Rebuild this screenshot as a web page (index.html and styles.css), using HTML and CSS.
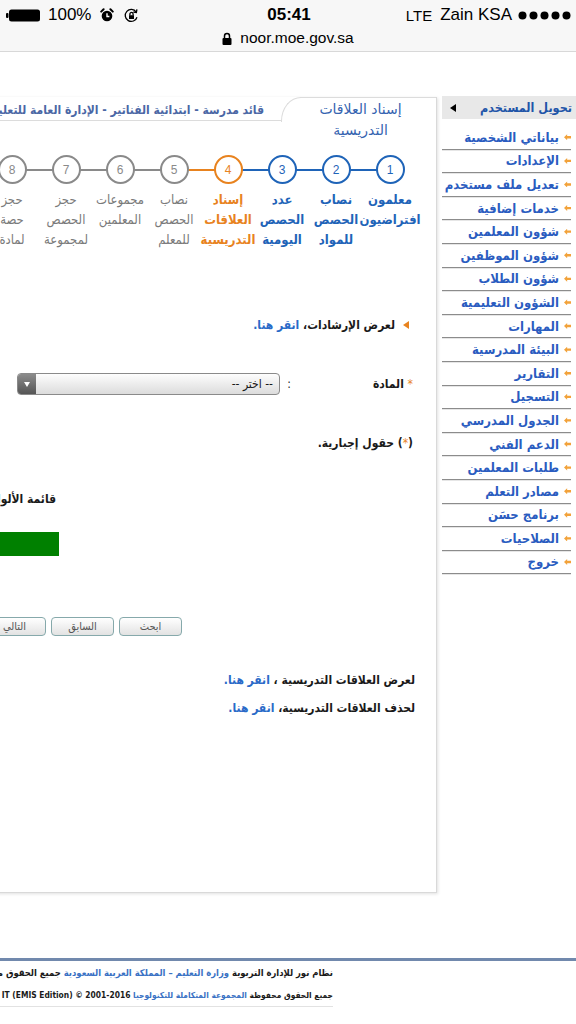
FILE: index.html
```html
<!DOCTYPE html>
<html lang="ar">
<head>
	<meta charset="UTF-8">
	<title>إسناد العلاقات التدريسية</title>
	<link rel="stylesheet" href="styles.css">
</head>
<body>
	<div class="statusbar">
		<div class="status-row">
			<div class="status-left">
				<svg width="35" height="13" viewBox="0 0 35 13"><rect x="0" y="4" width="2.5" height="5" rx="1"/><rect x="3" y="0.5" width="31" height="12" rx="2.5"/></svg>
				<span>100%</span>
				<svg class="ico-alarm" width="14" height="14" viewBox="0 0 14 14"><circle cx="7" cy="8" r="5.3"/><path d="M1.2 3.6 L3.6 1.2 M12.8 3.6 L10.4 1.2" stroke="#000" stroke-width="2" stroke-linecap="round"/><path d="M7 5.2v3.3h2.4" stroke="#fff" stroke-width="1.4" fill="none"/></svg>
				<svg class="ico-rotate" width="15" height="15" viewBox="0 0 15 15" fill="none" stroke="#000" stroke-width="1.3"><path d="M13 9.2 A6 6 0 1 1 12.2 4"/><path d="M12.9 1.4 L12.4 4.4 L9.4 4"/><rect x="5" y="7.2" width="5" height="3.8" fill="#000" stroke="none"/><path d="M5.9 7.2V6a1.6 1.6 0 0 1 3.2 0v1.2"/></svg>
			</div>
			<div class="status-time">05:41</div>
			<div class="status-right">
				<span class="lte">LTE</span>
				<span>Zain KSA</span>
				<svg width="54" height="9" viewBox="0 0 54 9"><circle cx="4.5" cy="4.5" r="4"/><circle cx="15.5" cy="4.5" r="4"/><circle cx="26.5" cy="4.5" r="4"/><circle cx="37.5" cy="4.5" r="4"/><circle cx="48.5" cy="4.5" r="4"/></svg>
			</div>
		</div>
		<div class="status-url">
			<svg width="10" height="13" viewBox="0 0 10 13"><path d="M2.5 6.5V4a2.5 2.5 0 0 1 5 0v2.5" fill="none" stroke="#000" stroke-width="1.5"/><rect x="0.5" y="6" width="9" height="7" rx="1"/></svg>
			<span>noor.moe.gov.sa</span>
		</div>
	</div>

	<div class="page">
		<div class="layout">
			<aside class="sidebar">
				<div class="side-head"><span>تحويل المستخدم</span><i class="tri"></i></div>
				<ul class="side-menu">
					<li><a href="#">بياناتي الشخصية</a></li>
					<li><a href="#">الإعدادات</a></li>
					<li><a href="#">تعديل ملف مستخدم</a></li>
					<li><a href="#">خدمات إضافية</a></li>
					<li><a href="#">شؤون المعلمين</a></li>
					<li><a href="#">شؤون الموظفين</a></li>
					<li><a href="#">شؤون الطلاب</a></li>
					<li><a href="#">الشؤون التعليمية</a></li>
					<li><a href="#">المهارات</a></li>
					<li><a href="#">البيئة المدرسية</a></li>
					<li><a href="#">التقارير</a></li>
					<li><a href="#">التسجيل</a></li>
					<li><a href="#">الجدول المدرسي</a></li>
					<li><a href="#">الدعم الفني</a></li>
					<li><a href="#">طلبات المعلمين</a></li>
					<li><a href="#">مصادر التعلم</a></li>
					<li><a href="#">برنامج حسَن</a></li>
					<li><a href="#">الصلاحيات</a></li>
					<li><a href="#">خروج</a></li>
				</ul>
			</aside>

			<main class="panel">
				<div class="panel-head">
					<div class="tab">إسناد العلاقات<br>التدريسية</div>
					<div class="crumb">قائد مدرسة - ابتدائية الفناتير - الإدارة العامة للتعليم</div>
				</div>

				<ol class="steps">
					<li class="step done"><span class="num">1</span><span class="label"><span>معلمون</span><span>افتراضيون</span></span></li>
					<li class="step done"><span class="num">2</span><span class="label"><span>نصاب</span><span>الحصص</span><span>للمواد</span></span></li>
					<li class="step done"><span class="num">3</span><span class="label"><span>عدد</span><span>الحصص</span><span>اليومية</span></span></li>
					<li class="step current"><span class="num">4</span><span class="label"><span>إسناد</span><span>العلاقات</span><span>التدريسية</span></span></li>
					<li class="step"><span class="num">5</span><span class="label"><span>نصاب</span><span>الحصص</span><span>للمعلم</span></span></li>
					<li class="step"><span class="num">6</span><span class="label"><span>مجموعات</span><span>المعلمين</span></span></li>
					<li class="step"><span class="num">7</span><span class="label"><span>حجز</span><span>الحصص</span><span>لمجموعة</span></span></li>
					<li class="step"><span class="num">8</span><span class="label"><span>حجز</span><span>حصة</span><span>لمادة</span></span></li>
				</ol>

				<p class="hint"><i class="hint-tri"></i><span>لعرض الإرشادات، <a href="#">انقر هنا.</a></span></p>

				<div class="field">
					<label class="field-label"><span class="req">*</span> المادة</label>
					<span class="colon">:</span>
					<div class="select"><span>-- اختر --</span><i class="select-btn"></i></div>
				</div>

				<p class="note">(<span class="req">*</span>) حقول إجبارية.</p>

				<div class="legend-title">قائمة الألوان</div>
				<div class="legend-bar"></div>

				<div class="buttons">
					<button type="button">ابحث</button>
					<button type="button">السابق</button>
					<button type="button">التالي</button>
				</div>

				<p class="link-line">لعرض العلاقات التدريسية ، <a href="#">انقر هنا.</a></p>
				<p class="link-line second">لحذف العلاقات التدريسية، <a href="#">انقر هنا.</a></p>
			</main>
		</div>

		<footer class="footer">
			<p>نظام نور للإدارة التربوية <a href="#">وزارة التعليم – المملكة العربية السعودية</a> جميع الحقوق محفوظة</p>
			<p class="footer-end">جميع الحقوق محفوظة <a href="#">المجموعة المتكاملة للتكنولوجيا</a> <bdi dir="ltr">IT (EMIS Edition) © 2001-2016</bdi></p>
		</footer>
	</div>
</body>
</html>
```

FILE: styles.css
```css
*{
	box-sizing: border-box;
}
html, body{
	margin: 0;
	padding: 0;
}
body{
	width: 576px;
	height: 1024px;
	overflow: hidden;
	background-color: #fff;
	font-family: "DejaVu Sans Condensed", "DejaVu Sans", sans-serif;
	color: #1a1a1a;
}
a{
	color: #2a6ac8;
	text-decoration: none;
}

/* phone status bar + address */
.statusbar{
	height: 52px;
	background-color: #f7f7f7;
	border-bottom: 1px solid #d8d8d8;
	font-family: "Liberation Sans", Arial, sans-serif;
	color: #000;
}
.status-row{
	display: grid;
	grid-template-columns: 1fr auto 1fr;
	align-items: center;
	height: 28px;
	padding: 2px 4px 0 6px;
	font-size: 17px;
}
.status-left{
	display: flex;
	align-items: center;
	gap: 7px;
}
.ico-alarm{
	margin-left: 2px;
}
.ico-rotate{
	margin-left: 3px;
}
.status-time{
	font-weight: bold;
}
.status-right{
	display: flex;
	align-items: center;
	justify-content: flex-end;
	gap: 6px;
}
.lte{
	font-size: 15px;
	margin-right: 2px;
}
.status-url{
	display: flex;
	justify-content: center;
	align-items: center;
	gap: 8px;
	height: 20px;
	font-size: 15.5px;
}

/* page */
.page{
	direction: rtl;
	width: 576px;
	overflow: hidden;
}
.layout{
	display: flex;
	align-items: flex-start;
	padding-top: 44px;
}

/* right menu */
.sidebar{
	flex: 0 0 134px;
	margin-left: 5px;
}
.side-head{
	display: flex;
	justify-content: space-between;
	align-items: center;
	height: 23px;
	padding: 0 4px 0 8px;
	background-color: #e8e8e8;
	color: #1f55a8;
	font-weight: bold;
	font-size: 12.5px;
}
.tri{
	border-top: 4px solid transparent;
	border-bottom: 4px solid transparent;
	border-right: 6px solid #000;
}
.side-menu{
	list-style: none;
	margin: 0;
	padding: 7px 0 0;
}
.side-menu li{
	display: flex;
	align-items: center;
	gap: 5px;
	height: 23.6px;
	margin-right: 5px;
	border-bottom: 1px solid #8c8c8c;
	box-shadow: 0 1px 0 #e6e6e6;
	white-space: nowrap;
	font-size: 13px;
	font-weight: bold;
}
.side-menu li::before{
	content: "";
	flex: 0 0 7px;
	height: 6px;
	background-color: #f2a23a;
	clip-path: polygon(0 50%, 45% 0, 45% 30%, 100% 30%, 100% 70%, 45% 70%, 45% 100%);
}
.side-menu a{
	color: #2a5cc0;
}

/* main panel */
.panel{
	flex: 0 0 780px;
	height: 796px;
	margin-top: 1px;
	border-right: 1px solid #d9d9d9;
	border-bottom: 1px solid #d9d9d9;
	box-shadow: 1px 1px 3px rgba(0, 0, 0, 0.12);
}
.panel-head{
	display: flex;
	align-items: flex-start;
	height: 58px;
}
.tab{
	position: relative;
	flex: 0 0 155px;
	padding: 2px 0 0 4px;
	text-align: center;
	line-height: 21px;
	font-family: "DejaVu Sans", sans-serif;
	font-size: 14px;
	color: #3563b0;
}
.tab::before{
	content: "";
	position: absolute;
	left: 0;
	top: 0;
	width: 20px;
	height: 24px;
	border-left: 1px solid #dcdcdc;
	border-top: 1px solid #dcdcdc;
	border-top-left-radius: 20px 24px;
}
.tab::after{
	content: "";
	position: absolute;
	left: 19px;
	right: 0;
	top: 0;
	border-top: 1px solid #dcdcdc;
}
.crumb{
	flex: 0 0 625px;
	height: 24px;
	padding: 3px 17px 0 0;
	border-bottom: 1px solid #dcdcdc;
	line-height: 20px;
	white-space: nowrap;
	font-size: 12px;
	font-weight: bold;
	color: #4b67a5;
}

/* wizard steps */
.steps{
	display: flex;
	list-style: none;
	margin: 0;
	padding: 0 19px 0 0;
}
.step{
	position: relative;
	flex: 0 0 54px;
	min-width: 0;
	display: flex;
	flex-direction: column;
	align-items: center;
	color: #8a8a8a;
}
.step::after{
	content: "";
	position: absolute;
	top: 13.5px;
	right: 27px;
	width: 54px;
	border-top: 2px solid currentColor;
}
.step.done{
	color: #1f64b8;
}
.step.current{
	color: #e8831f;
}
.num{
	position: relative;
	z-index: 1;
	display: flex;
	align-items: center;
	justify-content: center;
	flex-shrink: 0;
	width: 29px;
	height: 29px;
	border: 2px solid currentColor;
	border-radius: 50%;
	background-color: #fff;
	font-family: "Liberation Sans", Arial, sans-serif;
	font-size: 12px;
}
.label{
	display: flex;
	flex-direction: column;
	align-items: center;
	margin-top: 6px;
	line-height: 20px;
	font-size: 13px;
	font-weight: bold;
	white-space: nowrap;
}
.step:not(.done):not(.current) .label{
	font-weight: normal;
	color: #7a7a7a;
}

/* form */
.hint{
	display: flex;
	align-items: center;
	gap: 8px;
	margin: 65px 27px 0 0;
	line-height: 20px;
	font-size: 12px;
	font-weight: bold;
}
.hint-tri{
	border-top: 4px solid transparent;
	border-bottom: 4px solid transparent;
	border-right: 6px solid #e8831f;
}
.field{
	display: flex;
	align-items: center;
	height: 22px;
	margin: 38px 23px 0 0;
	font-size: 12px;
}
.field-label{
	width: 118px;
	font-weight: bold;
}
.req{
	color: #e8831f;
	font-weight: normal;
}
.colon{
	width: 15px;
	padding-right: 4px;
}
.select{
	display: flex;
	align-items: center;
	justify-content: space-between;
	width: 263px;
	height: 22px;
	padding-right: 6px;
	border: 1px solid #8a8a8a;
	border-radius: 4px;
	background: linear-gradient(#fdfdfd, #dcdcdc);
	overflow: hidden;
}
.select-btn{
	display: flex;
	align-items: center;
	justify-content: center;
	align-self: stretch;
	width: 18px;
	background: linear-gradient(#8c8c8c, #555);
}
.select-btn::before{
	content: "";
	border-left: 3.5px solid transparent;
	border-right: 3.5px solid transparent;
	border-top: 5px solid #fff;
}
.note{
	margin: 38px 23px 0 0;
	line-height: 20px;
	font-size: 12px;
	font-weight: bold;
}
.legend-title{
	margin: 36px 380px 0 0;
	line-height: 20px;
	font-size: 12px;
	font-weight: bold;
	white-space: nowrap;
}
.legend-bar{
	width: 200px;
	height: 24px;
	margin: 23px 377px 0 0;
	background-color: #008000;
}
.buttons{
	display: flex;
	gap: 5px;
	margin: 61px 254px 0 0;
}
.buttons button{
	width: 63px;
	height: 19px;
	padding: 0;
	border: 1px solid #86a9ab;
	border-radius: 4px;
	background: linear-gradient(#fff, #e2e2e2);
	font-family: "DejaVu Sans Condensed", "DejaVu Sans", sans-serif;
	font-size: 11px;
	color: #555;
}
.link-line{
	margin: 34px 21px 0 0;
	line-height: 20px;
	font-size: 12px;
	font-weight: bold;
}
.link-line.second{
	margin-top: 8px;
}

/* footer */
.footer{
	margin-top: 65px;
	padding: 1px 243px 0 0;
	border-top: 3px solid #7189ad;
	line-height: 22px;
	white-space: nowrap;
	font-size: 9.4px;
	font-weight: bold;
}
.footer p{
	margin: 0;
}
.footer-end{
	margin-left: -300px !important;
	border-bottom: 1px solid #e2e2e2;
	font-size: 8.4px;
}
.footer a{
	color: #3a72c4;
}
```
